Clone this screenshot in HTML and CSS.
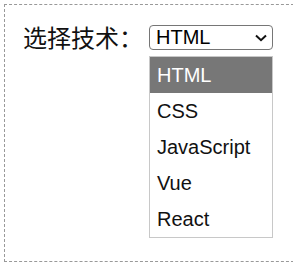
FILE: index.html
```html
<!DOCTYPE html>
<html lang="zh-CN">
<head>
  <meta charset="UTF-8">
  <meta name="viewport" content="width=device-width, initial-scale=1.0">
  <title>选择技术</title>
  <link rel="stylesheet" href="styles.css">
</head>
<body>
  <div class="box">
    <label class="label" for="tech">选择技术：</label>
    <div class="picker">
      <div class="select-wrap">
        <select id="tech" class="select">
          <option selected>HTML</option>
          <option>CSS</option>
          <option>JavaScript</option>
          <option>Vue</option>
          <option>React</option>
        </select>
        <svg class="chevron" width="12" height="8" viewBox="0 0 12 8">
          <path d="M1 1.5 L6 6.2 L11 1.5" fill="none" stroke="#111" stroke-width="2"/>
        </svg>
      </div>
      <ul class="options">
        <li class="option active">HTML</li>
        <li class="option">CSS</li>
        <li class="option">JavaScript</li>
        <li class="option">Vue</li>
        <li class="option">React</li>
      </ul>
    </div>
  </div>
</body>
</html>
```

FILE: styles.css
```css
body {
  margin: 4px;
  background: #fff;
  font-family: 'Liberation Sans', Arial, sans-serif;
}
.box {
  display: flex;
  align-items: flex-start;
  gap: 6px;
  padding: 20px 18px;
  box-sizing: border-box;
  height: 258px;
  width: 290px;
  border: 1px dashed #999;
}
.label {
  font-family: 'Noto Sans CJK SC', sans-serif;
  font-size: 24px;
  line-height: 28px;
  color: #111;
  margin-top: -2px;
}
.picker {
  display: flex;
  flex-direction: column;
  width: 124px;
}
.select-wrap {
  position: relative;
}
.select {
  appearance: none;
  -webkit-appearance: none;
  display: block;
  width: 124px;
  height: 25px;
  margin: 0;
  padding: 0 0 0 6px;
  font-family: 'Liberation Sans', Arial, sans-serif;
  font-size: 20px;
  line-height: 23px;
  color: #000;
  border: 1px solid #767676;
  border-radius: 4px;
  background: #fff;
}
.chevron {
  position: absolute;
  right: 6px;
  top: 9px;
  pointer-events: none;
}
.options {
  list-style: none;
  margin: 6px 0 0;
  padding: 0;
  border: 1px solid #c8c8c8;
}
.option {
  height: 36px;
  line-height: 36px;
  padding-left: 7px;
  font-size: 20px;
  color: #111;
}
.option.active {
  background: #777;
  color: #fff;
}
```
